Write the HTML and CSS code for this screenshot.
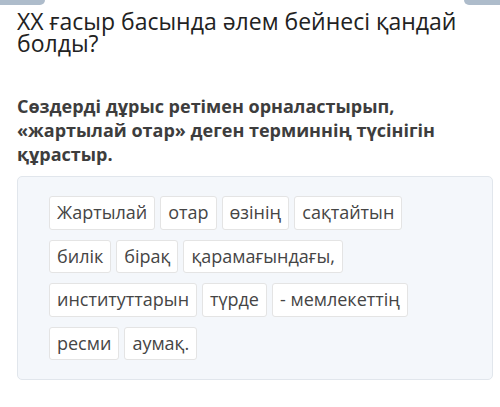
FILE: index.html
```html
<!DOCTYPE html>
<html lang="kk">
<head>
    <meta charset="UTF-8">
    <meta name="viewport" content="width=device-width, initial-scale=1.0">
    <title>Сөздерді ретімен орналастыр</title>
    <link rel="stylesheet" href="styles.css">
</head>
<body>
    <!-- Cut-off buttons of the previous block -->
    <div class="top-strip">
        <span class="tab tab-left"></span>
        <span class="tab tab-right"></span>
    </div>

    <h1 class="question">XX ғасыр басында әлем бейнесі қандай болды?</h1>

    <p class="instruction">Сөздерді дұрыс ретімен орналастырып, «жартылай отар» деген терминнің түсінігін құрастыр.</p>

    <!-- Word bank -->
    <div class="word-bank">
        <span class="word">Жартылай</span>
        <span class="word">отар</span>
        <span class="word">өзінің</span>
        <span class="word">сақтайтын</span>
        <span class="word">билік</span>
        <span class="word">бірақ</span>
        <span class="word">қарамағындағы,</span>
        <span class="word">институттарын</span>
        <span class="word">түрде</span>
        <span class="word">- мемлекеттің</span>
        <span class="word">ресми</span>
        <span class="word">аумақ.</span>
    </div>
</body>
</html>
```

FILE: styles.css
```css
body {
    font-family: "Open Sans", "Noto Sans", sans-serif;
    background-color: #fff;
    color: #222;
    margin: 0;
    padding: 0 7px 0 17px;
}

/* Top strip */
.top-strip {
    display: flex;
    justify-content: space-between;
    height: 5px;
    margin: 0 -7px 0 -17px;
}

.tab {
    display: block;
    height: 5px;
    background-color: #aebccb;
}

.tab-left {
    width: 45px;
    border-radius: 0 0 5px 0;
}

.tab-right {
    width: 36px;
    border-radius: 0 0 0 5px;
}

/* Question */
.question {
    font-size: 23px;
    font-weight: 400;
    line-height: 22px;
    margin: 5px 0 0 0;
    color: #222;
}

.instruction {
    font-size: 18px;
    font-weight: 700;
    line-height: 24px;
    color: #3d3d3d;
    margin: 40px 0 0 0;
}

/* Word bank */
.word-bank {
    display: flex;
    flex-wrap: wrap;
    gap: 10px 5px;
    margin-top: 10px;
    padding: 19px 31px 19px 31px;
    background-color: #f4f7fb;
    border: 1px solid #e1e6ec;
    border-radius: 5px;
}

.word {
    background-color: #fff;
    border: 1px solid #e4e4e4;
    border-radius: 3px;
    padding: 0 7px;
    font-size: 18px;
    line-height: 31.5px;
    color: #454545;
}
```
